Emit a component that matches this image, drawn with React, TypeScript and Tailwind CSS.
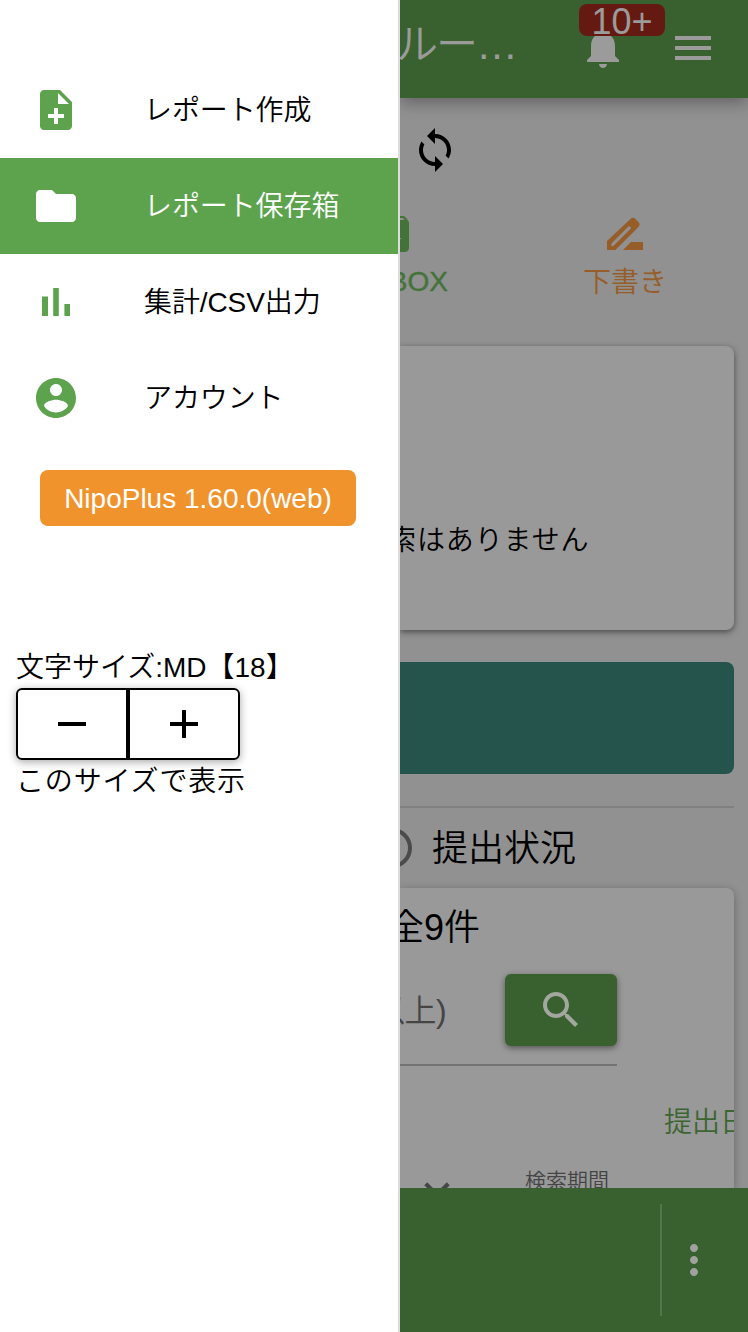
import React from "react";

const NOTE_ADD =
  "M14 2H6c-1.1 0-1.99.9-1.99 2L4 20c0 1.1.89 2 1.99 2H18c1.1 0 2-.9 2-2V8l-6-6zm2 14h-3v3h-2v-3H8v-2h3v-3h2v3h3v2zm-3-7V3.5L18.5 9H13z";
const FOLDER =
  "M10 4H4c-1.1 0-1.99.9-1.99 2L2 18c0 1.1.9 2 2 2h16c1.1 0 2-.9 2-2V8c0-1.1-.9-2-2-2h-8l-2-2z";
const BARS = "M5 9.2h3V19H5zM10.6 5h2.8v14h-2.8zm5.6 8H19v6h-2.8z";
const ACCOUNT =
  "M12 2C6.48 2 2 6.48 2 12s4.48 10 10 10 10-4.48 10-10S17.52 2 12 2zm0 3c1.66 0 3 1.34 3 3s-1.34 3-3 3-3-1.34-3-3 1.34-3 3-3zm0 14.2c-2.5 0-4.71-1.28-6-3.22.03-1.99 4-3.08 6-3.08 1.99 0 5.97 1.09 6 3.08-1.29 1.94-3.5 3.22-6 3.22z";
const LOOP =
  "M12 4V1L8 5l4 4V6c3.31 0 6 2.69 6 6 0 1.01-.25 1.97-.7 2.8l1.46 1.46C19.54 15.03 20 13.57 20 12c0-4.42-3.58-8-8-8zm0 14c-3.31 0-6-2.69-6-6 0-1.01.25-1.97.7-2.8L5.24 7.74C4.46 8.97 4 10.43 4 12c0 4.42 3.58 8 8 8v3l4-4-4-4v3z";
const BELL =
  "M12 22c1.1 0 2-.9 2-2h-4c0 1.1.89 2 2 2zm6-6v-5c0-3.07-1.64-5.64-4.5-6.32V4c0-.83-.67-1.5-1.5-1.5s-1.5.67-1.5 1.5v.68C7.63 5.36 6 7.92 6 11v5l-2 2v1h16v-1l-2-2z";
const MENU = "M3 18h18v-2H3v2zm0-5h18v-2H3v2zm0-7v2h18V6H3z";
const DRAFT =
  "M15 16l-4 4h10v-4zM3 15.5V20h4.2L18.6 8.6a1.9 1.9 0 000-2.7L17.3 4.6a1.9 1.9 0 00-2.7 0zM6.2 18H5.2v-1.2l8.4-8.4a.78.78 0 011.1 1.1z";
const ARCHIVE =
  "M20.54 5.23l-1.39-1.68C18.88 3.21 18.47 3 18 3H6c-.47 0-.88.21-1.16.55L3.46 5.23C3.17 5.57 3 6.02 3 6.5V19c0 1.1.9 2 2 2h14c1.1 0 2-.9 2-2V6.5c0-.48-.17-.93-.46-1.27zM12 19L6.5 14H10v-2h4v2h3.3L12 19zM5.12 5l.81-1h12l.94 1H5.12z";
const SEARCH =
  "M15.5 14h-.79l-.28-.27C15.41 12.59 16 11.11 16 9.5 16 5.91 13.09 3 9.5 3S3 5.91 3 9.5 5.91 16 9.5 16c1.61 0 3.09-.59 4.23-1.57l.27.28v.79l5 4.99L20.49 19l-4.99-5zm-6 0C7.01 14 5 11.99 5 9.5S7.01 5 9.5 5 14 7.01 14 9.5 11.99 14 9.5 14z";
const MORE =
  "M12 8c1.1 0 2-.9 2-2s-.9-2-2-2-2 .9-2 2 .9 2 2 2zm0 2c-1.1 0-2 .9-2 2s.9 2 2 2 2-.9 2-2-.9-2-2-2zm0 6c-1.1 0-2 .9-2 2s.9 2 2 2 2-.9 2-2-.9-2-2-2z";
const MINUS = "M19 13H5v-2h14v2z";
const PLUS = "M19 13h-6v6h-2v-6H5v-2h6V5h2v6h6v2z";
const CLOSE =
  "M19 6.41L17.59 5 12 10.59 6.41 5 5 6.41 10.59 12 5 17.59 6.41 19 12 13.41 17.59 19 19 17.59 13.41 12z";

function Icon({ d, size = "size-12", className = "" }: { d: string; size?: string; className?: string }) {
  return (
    <svg viewBox="0 0 24 24" fill="currentColor" fillRule="evenodd" className={`${size} shrink-0 ${className}`}>
      <path d={d} />
    </svg>
  );
}

const items = [
  { label: "レポート作成", icon: NOTE_ADD, active: false },
  { label: "レポート保存箱", icon: FOLDER, active: true },
  { label: "集計/CSV出力", icon: BARS, active: false },
  { label: "アカウント", icon: ACCOUNT, active: false },
];

function Drawer() {
  return (
    <aside className="flex w-[400px] shrink-0 flex-col border-r-2 border-[#dcdedc] bg-white pt-[62px] text-[28px] leading-[42px] text-black">
      <nav>
        {items.map((it) => (
          <a
            key={it.label}
            className={`flex h-24 items-center gap-16 px-8 whitespace-nowrap ${it.active ? "bg-[#5da34e] text-white" : ""}`}
          >
            <Icon d={it.icon} className={it.active ? "text-white" : "text-[#5da34e]"} />
            <span className="pt-0.5 tracking-[-0.1px]">{it.label}</span>
          </a>
        ))}
      </nav>
      <div className="mt-6 ml-10 flex h-14 w-[316px] items-center justify-center rounded-lg bg-[#f0932c] pt-0.5 text-white">
        NipoPlus 1.60.0(web)
      </div>
      <div className="mt-[120px] flex flex-col items-start pl-4">
        <div className="h-[42px] pt-px whitespace-nowrap">文字サイズ:MD【18】</div>
        <div className="flex h-[72px] w-56 rounded-md shadow-[0_2px_8px_rgba(0,0,0,0.35)]">
          <button className="flex flex-1 items-center justify-center rounded-l-md border-2 border-black">
            <Icon d={MINUS} />
          </button>
          <button className="flex flex-1 items-center justify-center rounded-r-md border-2 border-black">
            <Icon d={PLUS} />
          </button>
        </div>
        <div className="pt-px tracking-[0.85px] whitespace-nowrap">このサイズで表示</div>
      </div>
    </aside>
  );
}

function Content() {
  return (
    <main className="flex w-[348px] shrink-0 flex-col overflow-hidden bg-[#919191]">
      <header className="z-10 flex h-[98px] shrink-0 items-start bg-[#39612f] text-[#9b9b9b] shadow-[0_4px_16px_rgba(0,0,0,0.35)]">
        <div className="-ml-1 w-[183px] pt-[17px] text-[42px] leading-[56px] tracking-[-2px] whitespace-nowrap">
          ルー<span className="tracking-normal">…</span>
        </div>
        <div className="relative pt-6">
          <Icon d={BELL} />
          <div className="absolute top-1 left-0 flex h-8 w-[86px] items-center justify-center rounded-lg bg-[#651a11] pt-[3px] text-[36px] leading-8">
            10+
          </div>
        </div>
        <Icon d={MENU} className="mt-6 ml-[41.5px]" />
      </header>

      <div className="flex h-[248px] shrink-0 flex-col pt-7">
        <Icon d={LOOP} className="ml-[11px] text-black" />
        <div className="mt-9 flex justify-between text-[28px] leading-[42px] whitespace-nowrap">
          <div className="-ml-[33px] flex w-[81px] flex-col items-end text-[#44733a]">
            <Icon d={ARCHIVE} className="mr-[33px]" />
            <span className="mt-[3px] [-webkit-text-stroke:0.4px]">BOX</span>
          </div>
          <div className="mr-[81px] flex flex-col items-center text-[#965d28]">
            <Icon d={DRAFT} />
            <span className="mt-1">下書き</span>
          </div>
        </div>
      </div>

      <section className="mr-3.5 h-[284px] shrink-0 rounded-r-lg bg-[#999] pt-[174px] text-[28px] leading-[42px] whitespace-nowrap text-black shadow-[0_2px_6px_rgba(0,0,0,0.5)]">
        <div className="-ml-3 tracking-[0.9px]">索はありません</div>
      </section>

      <div className="mt-8 mr-3.5 h-28 shrink-0 rounded-r-lg bg-[#25544d]" />
      <div className="mt-8 mr-3.5 h-0.5 shrink-0 bg-[#808080]" />

      <div className="flex h-20 shrink-0 items-center gap-5 text-[36px] whitespace-nowrap text-black">
        <span className="-ml-7 size-10 shrink-0 rounded-full border-4 border-[#4b4b4b]" />
        <span className="pt-0.5">提出状況</span>
      </div>

      <section className="mr-3.5 flex h-[300px] shrink-0 flex-col overflow-hidden rounded-tr-lg bg-[#999] whitespace-nowrap shadow-[0_2px_8px_rgba(0,0,0,0.3)]">
        <div className="-ml-3 h-[86px] shrink-0 pt-[13px] text-[36px] leading-[54px] text-black">全9件</div>
        <div className="flex h-[92px] w-[217px] shrink-0 items-start justify-between border-b-2 border-[#737373] text-[32px] text-[#454545]">
          <span className="-ml-[27px] leading-[74px] tracking-[-0.5px]">以上)</span>
          <button className="flex h-[72px] w-28 items-center justify-center rounded-md bg-[#39612f] text-[#a3a79f] shadow-[0_2px_6px_rgba(0,0,0,0.45)]">
            <Icon d={SEARCH} />
          </button>
        </div>
        <div className="mt-9 ml-[264px] shrink-0 text-[28px] leading-[42px] text-[#3b6631]">提出日</div>
        <div className="mt-[22px] flex shrink-0 items-start text-[21px] leading-[30px] text-[#454545]">
          <Icon d={CLOSE} size="size-[42px]" className="mt-2 ml-4 stroke-current stroke-[0.5]" />
          <span className="ml-[67px]">検索期間</span>
        </div>
      </section>

      <footer className="z-10 flex h-36 shrink-0 justify-end bg-[#39612f] py-4 text-[#a0a39d]">
        <div className="flex w-[88px] items-center border-l-2 border-[#52764a] pl-2">
          <Icon d={MORE} />
        </div>
      </footer>
    </main>
  );
}

export default function App() {
  return (
    <div className="flex h-[1332px] w-[748px] overflow-hidden font-['Liberation_Sans','Noto_Sans_CJK_JP',sans-serif] font-[350]">
      <Drawer />
      <Content />
    </div>
  );
}
